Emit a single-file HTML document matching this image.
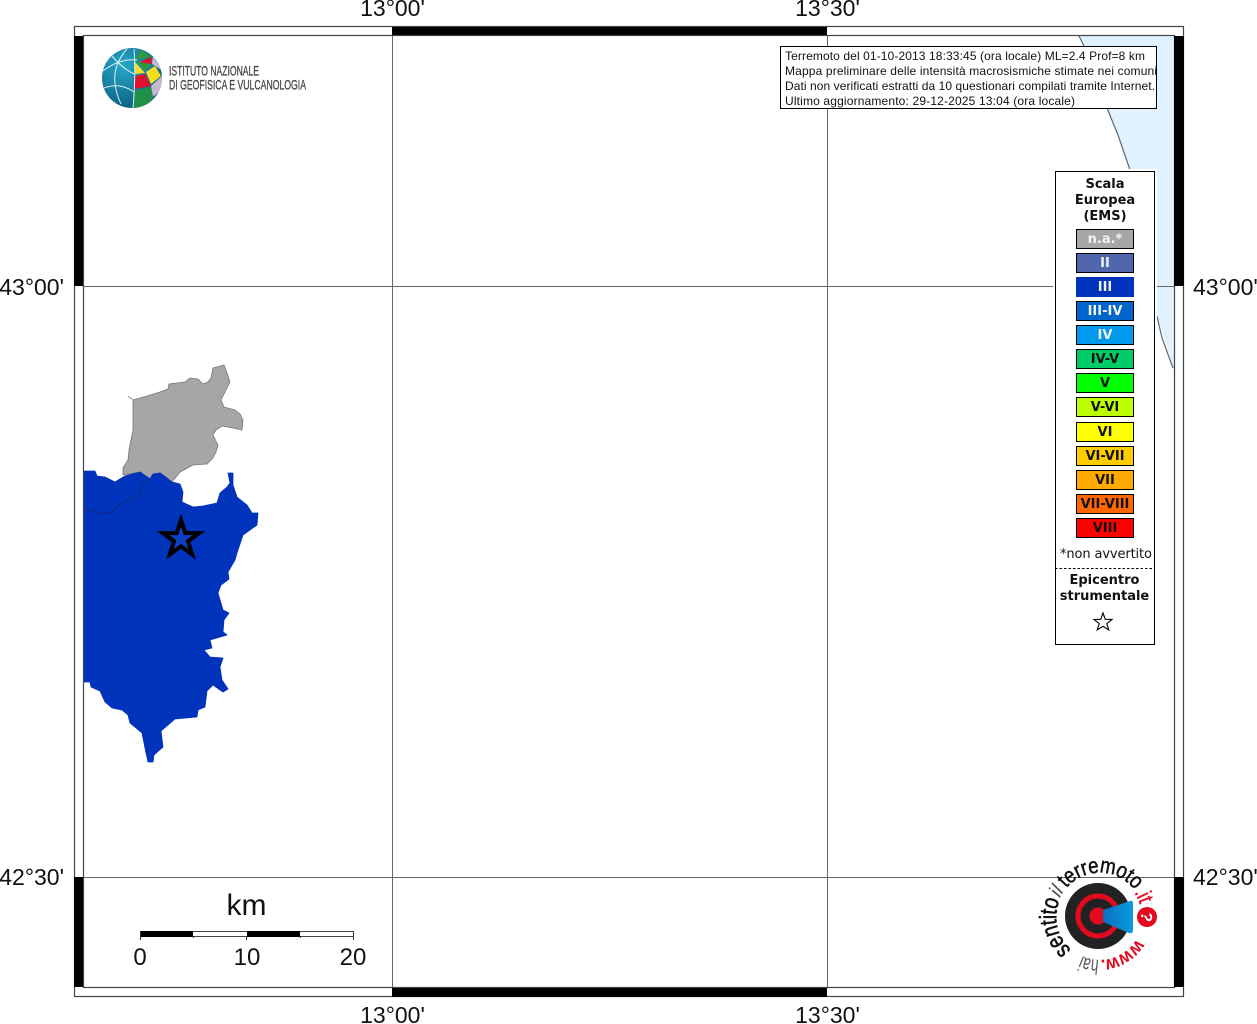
<!DOCTYPE html>
<html><head><meta charset="utf-8">
<style>
html,body{margin:0;padding:0;background:#fff;width:1257px;height:1024px;overflow:hidden}
svg{display:block}
.c{font-family:"Liberation Sans",sans-serif;font-size:23px;fill:#111}
.l{font-family:"DejaVu Sans",sans-serif;font-size:13px;font-weight:700;text-anchor:middle;fill:#111}
.i{font-family:"Liberation Sans",sans-serif;font-size:12px;fill:#111}
.h{font-family:"Liberation Sans",sans-serif;fill:#111}
</style></head><body>
<svg width="1257" height="1024" viewBox="0 0 1257 1024" xmlns="http://www.w3.org/2000/svg">
<defs>
<radialGradient id="gb" cx=".35" cy=".3" r=".8"><stop offset="0" stop-color="#28a9c6"/><stop offset=".6" stop-color="#14789c"/><stop offset="1" stop-color="#0d5a78"/></radialGradient>
<linearGradient id="cone" x1="0" y1="0" x2="1" y2="0"><stop offset="0" stop-color="#0a6fc0"/><stop offset="1" stop-color="#0b9be0"/></linearGradient>
<clipPath id="gc"><circle cx="132" cy="78" r="30"/></clipPath>
<clipPath id="ib"><rect x="780" y="46" width="377" height="63"/></clipPath>
<path id="ring" d="M1099.7,961.75 A45,45 0 1 1 1099.8,961.75"/>
</defs>

<!-- sea -->
<path d="M1079,36 L1174,36 L1174,370 L1158,318 L1130,170 L1118,135 L1107,108 L1086,50 Z" fill="#e0f2ff"/>
<path d="M1079,36 L1086,50 L1107,108 L1118,135 L1130,170 M1157,316 L1162,338 L1173,368" fill="none" stroke="#5d6870" stroke-width="1.2"/>

<!-- grey commune -->
<path d="M128,396 L133,400 L147,396 L160,392 L168,389 L169,384 L185,382 L190,378 L198,379 L203,384 L208,382 L211,378 L213,368 L224,365 L227,373 L230,382 L227,388 L225,392 L221,400 L224,407 L235,410 L240,414 L243,420 L242,430 L233,428 L222,426 L216,430 L213,435 L218,445 L216,452 L213,458 L207,464 L193,465 L180,472 L172,482 L167,478 L160,473 L153,474 L150,479 L140,472 L123,475 L123,468 L128,460 L129,450 L133,430 L133,400 Z" fill="#a6a6a6" stroke="#777" stroke-width=".8" stroke-linejoin="round"/>

<!-- blue commune -->
<path d="M84,471 L95,471 L97,476 L105,477 L115,482 L125,476 L140,472 L150,479 L153,474 L160,473 L167,478 L172,482 L180,484 L183,492 L182,502 L193,507 L203,506 L217,503 L220,493 L227,487 L230,483 L228,473 L233,473 L233,485 L237,497 L247,505 L252,513 L258,513 L257,525 L243,535 L240,544 L237,553 L235,560 L228,572 L229,579 L221,585 L218,593 L223,610 L229,613 L224,620 L223,632 L227,635 L210,640 L212,648 L204,650 L210,657 L223,658 L220,667 L222,680 L228,689 L223,692 L213,685 L207,691 L205,707 L198,710 L197,717 L175,719 L161,731 L163,747 L154,755 L153,762 L148,762 L145,748 L142,733 L130,723 L128,715 L122,710 L112,708 L105,702 L100,691 L91,687 L90,682 L84,682 Z" fill="#0033bb" stroke="#0033bb" stroke-width=".8" stroke-linejoin="round"/>
<path d="M84,508 L98,512 L110,513 L123,502 L137,497 L145,482 L150,479" fill="none" stroke="#10277c" stroke-width="1"/>
<path d="M181,520 L185.3,533.1 L199.1,533.1 L187.9,541.2 L192.2,554.4 L181,546.3 L169.8,554.4 L174.1,541.2 L162.9,533.1 L176.7,533.1 Z" fill="#0d3fc4" stroke="#000" stroke-width="4" stroke-linejoin="miter"/>

<!-- grid -->
<path d="M392.5,36V987M827.5,36V987M83,286.5H1174M83,877.5H1174" stroke="#666" stroke-width="1" fill="none"/>

<!-- frame -->
<rect x="74.5" y="26.5" width="1109" height="970" fill="none" stroke="#444" stroke-width="1.2"/>
<rect x="83.5" y="35.5" width="1091" height="952" fill="none" stroke="#444" stroke-width="1.2"/>
<path d="M74,36h9v250h-9zM74,877h9v110h-9zM1174,36h10v250h-10zM1174,877h10v110h-10zM392,27h435v8h-435zM392,988h435v9h-435z" fill="#000"/>

<!-- coordinate labels -->
<g class="c">
<text x="392.5" y="16" text-anchor="middle">13°00'</text>
<text x="827.5" y="16" text-anchor="middle">13°30'</text>
<text x="392.5" y="1023" text-anchor="middle">13°00'</text>
<text x="827.5" y="1023" text-anchor="middle">13°30'</text>
<text x="64" y="295" text-anchor="end">43°00'</text>
<text x="64" y="885" text-anchor="end">42°30'</text>
<text x="1193" y="295">43°00'</text>
<text x="1193" y="885">42°30'</text>
</g>

<!-- INGV logo -->
<circle cx="132" cy="78" r="30" fill="url(#gb)"/>
<g clip-path="url(#gc)">
<path d="M135,60 L141,50 L151,57 Z" fill="#2f9a3a"/>
<path d="M140,62 L151,57 L152,64 L143,63 Z" fill="#e2112b"/>
<path d="M153,56 L163,71 L152,64 Z" fill="#c5b8cf"/>
<path d="M136,61 L152,65 L145,70 Z" fill="#2f9a3a"/>
<path d="M135,62 L145,73 L135,74 Z" fill="#f4e01e"/>
<path d="M146,72 L155,66 L161,76 L151,84 Z" fill="#f4e01e"/>
<path d="M135,76 L145,74 L151,86 L135,89 Z" fill="#e2112b"/>
<path d="M151,86 L162,76 L162,89 L153,97 Z" fill="#c5b8cf"/>
<path d="M133,91 L151,87 L153,99 L145,110 L133,110 Z" fill="#1f8f4a"/>
<path d="M154,99 L160,92 L156,102 Z" fill="#e2112b"/>
<g fill="none" stroke="#dff0f5" stroke-width="1">
<path d="M134,49 Q136,75 133,108"/>
<path d="M127,49 Q106,72 121,104"/>
<path d="M103,71 Q120,58 137,60"/>
<path d="M104,88 Q120,82 134,92"/>
<path d="M112,56 Q122,68 134,74"/>
</g>
</g>
<g font-family="Liberation Sans,sans-serif" font-size="14" fill="#444" stroke="#444" stroke-width=".3">
<text x="169" y="75.5" textLength="90" lengthAdjust="spacingAndGlyphs">ISTITUTO NAZIONALE</text>
<text x="169" y="89.5" textLength="137" lengthAdjust="spacingAndGlyphs">DI GEOFISICA E VULCANOLOGIA</text>
</g>

<!-- info box -->
<rect x="780.5" y="46.5" width="376" height="62" fill="#fff" stroke="#000"/>
<g class="i" clip-path="url(#ib)">
<text x="785" y="60" textLength="360">Terremoto del 01-10-2013 18:33:45 (ora locale) ML=2.4 Prof=8 km</text>
<text x="785" y="75" textLength="372">Mappa preliminare delle intensità macrosismiche stimate nei comuni</text>
<text x="785" y="90" textLength="370">Dati non verificati estratti da 10 questionari compilati tramite Internet.</text>
<text x="785" y="105" textLength="290">Ultimo aggiornamento: 29-12-2025 13:04 (ora locale)</text>
</g>

<!-- legend -->
<rect x="1053" y="169" width="104" height="478" fill="#fff"/>
<rect x="1055.5" y="171.5" width="99" height="473" fill="#fff" stroke="#000"/>
<g class="l">
<text x="1105" y="188">Scala</text>
<text x="1105" y="204">Europea</text>
<text x="1105" y="220">(EMS)</text>
</g>
<g stroke="#000" stroke-width="1">
<rect x="1076.5" y="229.5" width="57" height="19" fill="#a6a6a6"/>
<rect x="1076.5" y="253.5" width="57" height="19" fill="#5066ae"/>
<rect x="1076.5" y="277.5" width="57" height="19" fill="#0033bb" stroke="#0033bb"/>
<rect x="1076.5" y="301.5" width="57" height="19" fill="#0066cc"/>
<rect x="1076.5" y="325.5" width="57" height="19" fill="#0099ee"/>
<rect x="1076.5" y="349.5" width="57" height="19" fill="#00cc66"/>
<rect x="1076.5" y="373.5" width="57" height="19" fill="#00ff00"/>
<rect x="1076.5" y="397.5" width="57" height="19" fill="#bbff00"/>
<rect x="1076.5" y="422.5" width="57" height="19" fill="#ffff00"/>
<rect x="1076.5" y="446.5" width="57" height="19" fill="#ffcc00"/>
<rect x="1076.5" y="470.5" width="57" height="19" fill="#ffaa00"/>
<rect x="1076.5" y="494.5" width="57" height="19" fill="#ff6600"/>
<rect x="1076.5" y="518.5" width="57" height="19" fill="#ff0000"/>
</g>
<g class="l">
<g style="fill:#f2f2f2">
<text x="1105" y="243">n.a.*</text>
<text x="1105" y="267">II</text>
<text x="1105" y="291">III</text>
<text x="1105" y="315">III-IV</text>
<text x="1105" y="339">IV</text>
</g>
<text x="1105" y="363">IV-V</text>
<text x="1105" y="387">V</text>
<text x="1105" y="411">V-VI</text>
<text x="1105" y="436">VI</text>
<text x="1105" y="460">VI-VII</text>
<text x="1105" y="484">VII</text>
<text x="1105" y="508">VII-VIII</text>
<text x="1105" y="532">VIII</text>
<text x="1106" y="558" style="font-weight:400" textLength="92">*non avvertito</text>
<text x="1104.5" y="584">Epicentro</text>
<text x="1104.5" y="600">strumentale</text>
</g>
<path d="M1055,568.5H1155" stroke="#000" stroke-dasharray="2.5 2" fill="none"/>
<path d="M1103,613 L1105.3,619.3 L1112,619.5 L1106.8,623.6 L1108.8,630 L1103,626.3 L1097.2,630 L1099.2,623.6 L1094,619.5 L1100.7,619.3 Z" fill="#fff" stroke="#000" stroke-width="1.1"/>

<!-- scale -->
<text class="h" x="246.5" y="915" font-size="30" text-anchor="middle">km</text>
<rect x="140.5" y="931.5" width="213" height="5" fill="#fff" stroke="#444"/>
<path d="M140,931h53v6h-53zM247,931h53v6h-53z" fill="#000"/>
<path d="M140.5,931V940M193.5,936V938M246.5,936V940M300.5,936V938M353.5,931V940" stroke="#333" fill="none"/>
<g class="h" font-size="24" text-anchor="middle">
<text x="140" y="965">0</text>
<text x="247" y="965">10</text>
<text x="353" y="965">20</text>
</g>

<!-- hai sentito logo -->
<circle cx="1098" cy="916" r="33" fill="#222"/>
<circle cx="1098" cy="916" r="20" fill="none" stroke="#e30a1e" stroke-width="5"/>
<circle cx="1098" cy="916" r="8.5" fill="#e30a1e"/>
<path d="M1103,910 L1130,901 Q1133,900 1133,903 L1133,930 Q1133,934 1129,933 L1103,922 Z" fill="url(#cone)"/>
<circle cx="1147" cy="917" r="10" fill="#e30a1e"/>
<text x="1147" y="923" transform="rotate(100 1147 917)" text-anchor="middle" font-family="Liberation Sans,sans-serif" font-weight="700" font-size="16" fill="#fff">?</text>
<g font-family="Liberation Sans,sans-serif" font-size="22">
<text fill="#111" stroke="#111" stroke-width=".5" dy="1"><textPath href="#ring" startOffset="102" textLength="80" lengthAdjust="spacingAndGlyphs">terremoto</textPath></text>
<text fill="#111" stroke="#111" stroke-width=".6" font-size="24" dy="1.5"><textPath href="#ring" startOffset="32" textLength="56" lengthAdjust="spacingAndGlyphs">sentito</textPath></text>
<text fill="#555" font-style="italic" font-size="20" dy="1"><textPath href="#ring" startOffset="90" textLength="9" lengthAdjust="spacingAndGlyphs">il</textPath></text>
<text fill="#e30a1e" stroke="#e30a1e" stroke-width=".4" dy="3"><textPath href="#ring" startOffset="184" textLength="14" lengthAdjust="spacingAndGlyphs">.it</textPath></text>
<text fill="#555" font-size="21" dy="2"><textPath href="#ring" startOffset="1" textLength="18" lengthAdjust="spacingAndGlyphs">hai</textPath></text>
<text fill="#e30a1e" font-weight="700" font-size="19" dy="2"><textPath href="#ring" startOffset="236" textLength="45" lengthAdjust="spacingAndGlyphs">www.</textPath></text>
</g>
</svg>
</body></html>
